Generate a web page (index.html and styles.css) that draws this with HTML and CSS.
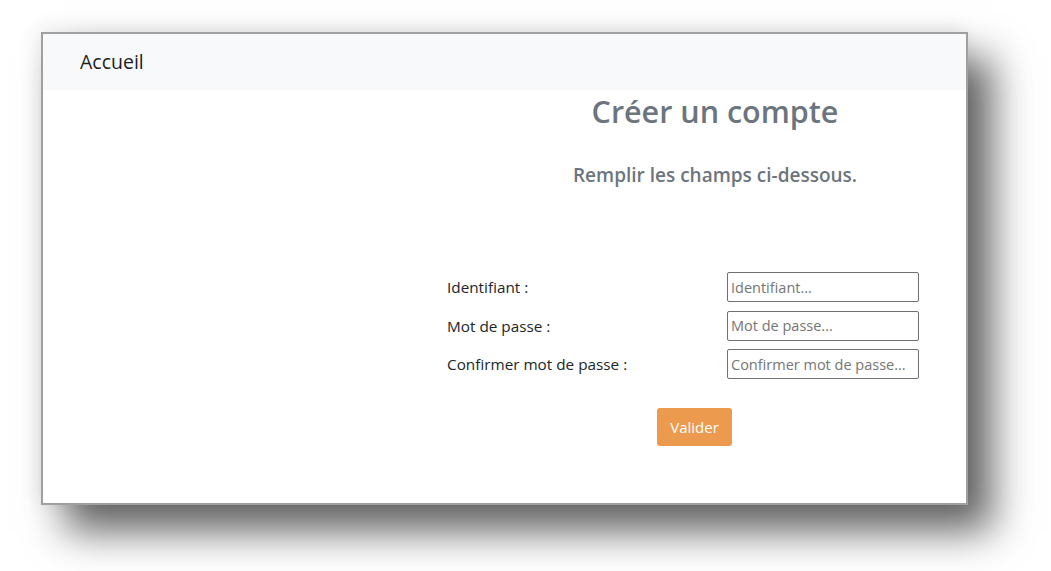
FILE: index.html
```html
<!DOCTYPE html>
<html lang="fr">
<head>
<meta charset="utf-8">
<title>Créer un compte</title>
<link rel="stylesheet" href="styles.css">
</head>
<body>
<div class="window">
  <nav class="navbar"><a class="brand" href="#">Accueil</a></nav>
  <main class="main">
    <header class="heading">
      <h1 class="title">Créer un compte</h1>
      <h2 class="subtitle">Remplir les champs ci-dessous.</h2>
    </header>
    <form class="form">
      <div class="row">
        <label class="label" for="id">Identifiant :</label>
        <input class="input" id="id" type="text" placeholder="Identifiant...">
      </div>
      <div class="row">
        <label class="label" for="pw">Mot de passe :</label>
        <input class="input" id="pw" type="password" placeholder="Mot de passe...">
      </div>
      <div class="row">
        <label class="label" for="pw2">Confirmer mot de passe :</label>
        <input class="input" id="pw2" type="password" placeholder="Confirmer mot de passe...">
      </div>
      <div class="actions">
        <button class="btn" type="button">Valider</button>
      </div>
    </form>
  </main>
</div>
</body>
</html>
```
FILE: styles.css
```css
html, body {
  margin: 0;
  padding: 0;
  background: #ffffff;
}
body {
  font-family: "Open Sans", "Noto Sans", sans-serif;
  color: #212529;
  min-height: 571px;
  padding: 32px 0 0 41px;
  box-sizing: border-box;
}
.window {
  box-sizing: border-box;
  width: 927px;
  height: 473px;
  border: 2px solid #a0a0a0;
  background: #ffffff;
  box-shadow: 24px 26px 38px rgba(0, 0, 0, 0.62), -4px -4px 18px rgba(0, 0, 0, 0.08);
}
.navbar {
  height: 56px;
  background: #f8f9fa;
  display: flex;
  align-items: center;
  padding-left: 37px;
}
.brand {
  font-size: 19.5px;
  color: rgba(0, 0, 0, 0.9);
  text-decoration: none;
  margin-top: -1px;
}
.heading {
  padding-left: 421px;
  text-align: center;
  color: #6c757d;
}
.title {
  margin: 2px 0 0;
  font-size: 30.5px;
  line-height: 38px;
  font-weight: 600;
}
.subtitle {
  margin: 33px 0 0;
  font-size: 19px;
  line-height: 24px;
  font-weight: 600;
}
.form {
  margin: 85px 0 0 404px;
  width: 472px;
}
.row {
  display: flex;
  justify-content: space-between;
  align-items: center;
  height: 30px;
  margin-bottom: 8.5px;
}
.label {
  font-size: 15.3px;
}
.input {
  box-sizing: border-box;
  width: 192px;
  height: 30px;
  border: 1px solid #707070;
  border-radius: 2px;
  padding: 0 3px;
  font-family: "Open Sans", "Noto Sans", sans-serif;
  font-size: 14.5px;
  color: #212529;
}
.input::placeholder {
  color: #757575;
}
.actions {
  display: flex;
  padding-left: 210px;
  margin-top: 29px;
}
.btn {
  width: 75px;
  height: 38px;
  border: none;
  border-radius: 3px;
  background: #ec9a4d;
  color: #ffffff;
  font-family: "Open Sans", "Noto Sans", sans-serif;
  font-size: 15px;
}
```
